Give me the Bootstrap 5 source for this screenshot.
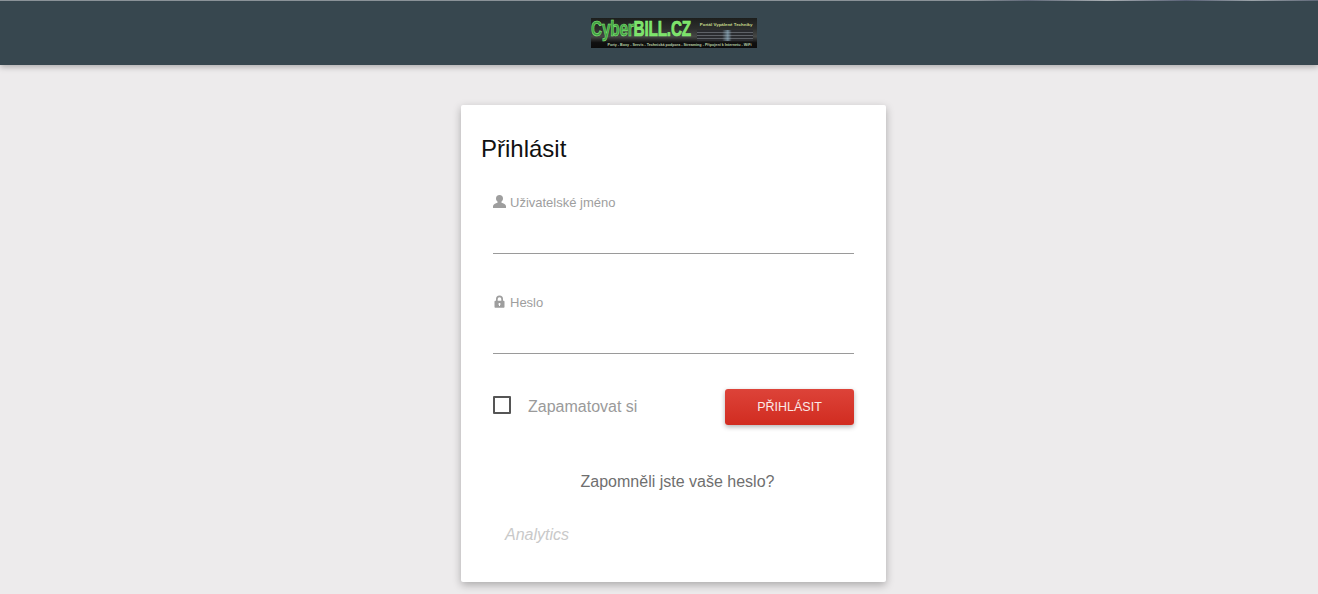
<!DOCTYPE html>
<html lang="cs">
<head>
    <meta charset="UTF-8">
    <meta name="viewport" content="width=device-width, initial-scale=1.0">
    <title>Přihlásit - CyberBILL.CZ</title>
    <link href="https://cdn.jsdelivr.net/npm/bootstrap@5.3.0/dist/css/bootstrap.min.css" rel="stylesheet">
    <style>
        html, body { height: 594px; overflow: hidden; }
        body { background: #edebec; font-family: "Liberation Sans", Arial, sans-serif; }
        .top-bar { height: 65px; padding-left: 29px; box-shadow: 0 2px 6px rgba(0,0,0,.28);
            background: linear-gradient(90deg, #8a9298 0, #8a9298 74%, #5f6878 78%, #aab0b4 84%, #565f74 90%, #9aa2a8 95%, #5f6878 100%) top / 100% 1px no-repeat, #37474f; }
        .logo-box { width: 166px; height: 30px; margin-top: 18px; background: linear-gradient(#1d1f1d, #2c2e2c 35%, #464846 62%, #101010 82%, #0c0c0c); overflow: hidden; }
        .logo-head { height: 24px; }
        .logo-main { width: 106px; flex: none; font-weight: 700; font-size: 17px; line-height: 24px; letter-spacing: -.2px; color: #3f9f42; -webkit-text-stroke: .5px #8cf07c; white-space: nowrap; transform: scale(.9, 1.28); transform-origin: 1px 50%; }
        .logo-main b { color: #7be468; }
        .logo-side { font-size: 4.400px; line-height: 7px; margin-top: 3px; font-weight: 700; color: #c8dc8c; white-space: nowrap; text-align: right; padding-right: 4px; }
        .logo-rack { height: 11px; margin-top: 2px; margin-right: 4px; background: linear-gradient(90deg, transparent 45%, rgba(159,196,216,.6) 55%, transparent 62%), repeating-linear-gradient(0deg, #2a2c30 0 2px, #5e6268 2px 3px); }
        .logo-tag { font-size: 3.700px; line-height: 6px; font-weight: 700; color: #b9d0a8; white-space: nowrap; text-align: center; padding-left: 12px; }
        .login-box { width: 425px; height: 477px; margin: 40px 0 0 461px; padding: 27px 32px 0; background: #fff; border-radius: 2px; box-shadow: 0 3px 8px rgba(0,0,0,.28); }
        .login-title { margin: 0 0 0 -12px; font-size: 24px; line-height: 34px; font-weight: 400; color: #111; }
        .field-box { height: 100px; }
        .field-first { margin-top: 9px; height: 94px; padding-top: 19px; }
        .field-label { gap: 4px; font-size: 13px; line-height: 18px; color: #9e9e9e; padding-top: 25px; }
        .field-label svg { margin-bottom: 3px; }
        .field-first .field-label { padding-top: 0; }
        .field-input { display: block; width: 100%; height: 42px; padding: 0; border: 0; border-bottom: 1px solid #9a9a9a; border-radius: 0; background: transparent; outline: 0; }
        .remember-row { margin-top: 20px; height: 36px; }
        .tick-box { appearance: none; width: 18px; height: 18px; margin: 0 17px 4px 0; border: 2px solid #555; border-radius: 1px; background: #fff; }
        .tick-label { font-size: 16px; color: #9a9a9a; }
        .login-btn { width: 129px; height: 36px; padding: 0; border: 0; border-radius: 3px; font-size: 12.500px; color: #fbe9e7; background: linear-gradient(#dd4339, #d12c20); box-shadow: 0 2px 5px rgba(0,0,0,.3); }
        .forgot-link { margin-top: 47px; padding-left: 8px; font-size: 16px; line-height: 20px; color: #6f6f6f; text-decoration: none; text-align: center; display: block; }
        .analytics-note { margin: 33px 0 0 12px; font-size: 16px; line-height: 20px; font-style: italic; color: #c9c9c9; }
    </style>
</head>
<body>

    <header class="top-bar d-flex justify-content-center">
        <div class="logo-box">
            <div class="logo-head d-flex">
                <div class="logo-main">Cyber<b>BILL.CZ</b></div>
                <div class="flex-grow-1 overflow-hidden">
                    <div class="logo-side">Portál Vypálené Techniky</div>
                    <div class="logo-rack"></div>
                </div>
            </div>
            <div class="logo-tag">Porty - Boxy - Servis - Technická podpora - Streaming - Připojení k Internetu - WiFi</div>
        </div>
    </header>

    <main class="login-box">
        <h1 class="login-title">Přihlásit</h1>
        <form>
            <div class="field-box field-first">
                <label class="field-label d-flex align-items-center" for="jmeno">
                    <svg width="13" height="13" viewBox="0 0 13 13" fill="#9e9e9e"><path d="M6.500 0C4.300 0 3 1.400 3 3.400c0 1.300.6 2.500 1.500 3.200v1.100C2.500 8.300 0 9.200 0 11.200V13h13v-1.800c0-2-2.500-2.900-4.500-3.500V6.600c.9-.7 1.500-1.900 1.500-3.200C10 1.400 8.700 0 6.500 0z"/></svg>
                    Uživatelské jméno
                </label>
                <input class="field-input" id="jmeno" type="text">
            </div>
            <div class="field-box">
                <label class="field-label d-flex align-items-center" for="heslo">
                    <svg width="13" height="13" viewBox="0 0 13 13" fill="#9e9e9e"><path fill-rule="evenodd" d="M6.500.5A3.500 3.500 0 0 0 3 4v1.800h-.5c-.6 0-1 .4-1 1v5c0 .6.4 1 1 1h8c.6 0 1-.4 1-1v-5c0-.6-.4-1-1-1H10V4A3.500 3.500 0 0 0 6.500.5zM4.700 5.800V4a1.800 1.800 0 0 1 3.600 0v1.800zM6.500 8a1 1 0 0 1 .5 1.900v1H6v-1A1 1 0 0 1 6.500 8z"/></svg>
                    Heslo
                </label>
                <input class="field-input" id="heslo" type="password">
            </div>
            <div class="remember-row d-flex align-items-center justify-content-between">
                <label class="d-flex align-items-center">
                    <input class="tick-box" type="checkbox">
                    <span class="tick-label">Zapamatovat si</span>
                </label>
                <button class="btn login-btn" type="button">PŘIHLÁSIT</button>
            </div>
            <a class="forgot-link" href="#">Zapomněli jste vaše heslo?</a>
            <p class="analytics-note">Analytics</p>
        </form>
    </main>

</body>
</html>
